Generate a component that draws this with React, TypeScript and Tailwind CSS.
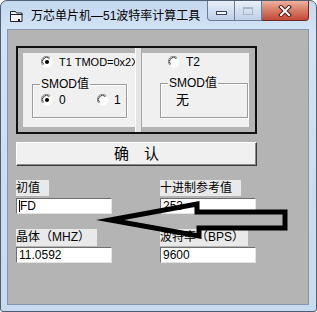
import React from "react";

function Radio({ on }: { on?: boolean }) {
  return (
    <svg width="12" height="12" viewBox="0 0 12 12" className="shrink-0">
      <circle cx="6" cy="6" r="5.5" fill="#ffffff" />
      <path d="M1.8 9.2A5.2 5.2 0 0 1 9.2 1.8" fill="none" stroke="#8a8a8a" strokeWidth="1" />
      <path d="M2.6 8.4A4 4 0 0 1 8.4 2.6" fill="none" stroke="#3a3a3a" strokeWidth="1" />
      {on && <circle cx="6" cy="6" r="2" fill="#000000" />}
    </svg>
  );
}

function Field({ value, caret }: { value: string; caret?: boolean }) {
  return (
    <div className="w-[96px] h-[16px] bg-white border-t border-l border-t-[#6f6f6f] border-l-[#6f6f6f] border-b border-r border-b-[#e4e4e4] border-r-[#e4e4e4] flex items-center pl-[2px] text-[12px] leading-[14px] text-black whitespace-nowrap">
      {caret && <span className="w-[1px] h-[12px] bg-black mr-[0px]" />}
      {value}
    </div>
  );
}

function Label({ text, w, h = "h-[16px]" }: { text: string; w: string; h?: string }) {
  return (
    <div className={`${w} ${h} bg-[#e9e9e9] text-[12px] leading-[16px] text-black whitespace-nowrap`}>{text}</div>
  );
}

export default function App() {
  return (
    <div className="w-[317px] h-[312px] bg-white font-['Liberation_Sans','Noto_Sans_CJK_SC',sans-serif]">
      <div className="w-full h-full flex flex-col border border-[#4f5e73] rounded-t-[7px] rounded-b-[3px] bg-[linear-gradient(#c4d8ef,#d3e3f5_30px,#c8daef)]">
        {/* title bar */}
        <div className="h-[28px] flex items-start shrink-0">
          <svg width="13" height="12" viewBox="0 0 13 12" className="ml-[9px] mt-[9px]">
            <path d="M0.5 1.5h5l1 1.5h5.5v8.5h-11.5z" fill="#f4f4f4" stroke="#202020" />
            <path d="M0.5 4.5h12" stroke="#202020" />
            <rect x="8" y="9" width="2" height="2" fill="#202020" />
          </svg>
          <div className="ml-[8px] mt-[7px] text-[12px] leading-[16px] text-black whitespace-nowrap">万芯单片机—51波特率计算工具</div>
          <div className="flex-1" />
          <div className="flex h-[20px] mr-[7px]">
            <div className="w-[28px] h-[20px] border border-t-0 border-[#6b7c95] rounded-bl-[4px] bg-[linear-gradient(#e9f0f9,#d2dfee_50%,#bfd0e6)] flex items-center justify-center">
              <div className="w-[11px] h-[4px] bg-white border border-[#34445a] mt-[5px]" />
            </div>
            <div className="w-[27px] h-[20px] border-b border-r border-[#6b7c95] bg-[linear-gradient(#e9f0f9,#d2dfee_50%,#bfd0e6)] flex items-center justify-center">
              <div className="w-[10px] h-[8px] border border-[#a9b6c8] border-t-2" />
            </div>
            <div className="w-[47px] h-[20px] border-b border-r border-[#6e2a22] rounded-br-[4px] bg-[linear-gradient(#eeb0a0,#d8806c_45%,#c14a36)] flex items-center justify-center">
              <svg width="14" height="12" viewBox="0 0 14 12">
                <path d="M3 2L11 10M11 2L3 10" stroke="#4a1a14" strokeWidth="4" strokeLinecap="square" />
                <path d="M3 2L11 10M11 2L3 10" stroke="#ffffff" strokeWidth="2" strokeLinecap="square" />
              </svg>
            </div>
          </div>
        </div>

        {/* client */}
        <div className="pl-[6px] pr-[7px] pb-[6px]">
          <div className="relative h-[276px] border border-[#8597ae] bg-[#b4b4b4] overflow-hidden">
            <div className="flex flex-col pl-[8px] pt-[16px]">
              {/* timer frame */}
              <div className="w-[241px] h-[88px] border-2 border-[#111111] flex">
                <div className="pl-[5px] py-[5px]">
                  <div className="w-[112px] h-[74px] bg-[#f0f0f0] overflow-hidden flex flex-col">
                    <div className="flex items-center h-[12px] mt-[3px] pl-[18px]">
                      <Radio on />
                      <span className="ml-[6px] text-[11px] leading-[14px] text-black whitespace-nowrap">T1 TMOD=0x2X</span>
                    </div>
                    <fieldset className="ml-[9px] mt-[9px] w-[95px] h-[41px] border border-[#9c9c9c] shadow-[inset_1px_1px_0_#ffffff,1px_1px_0_#ffffff]">
                      <legend className="ml-[7px] px-[1px] text-[12px] leading-[14px] text-black">SMOD值</legend>
                      <div className="flex items-center h-[12px] mt-[3px] pl-[8px]">
                        <div className="flex items-center w-[56px]">
                          <Radio on />
                          <span className="ml-[6px] text-[12px] leading-[14px] text-black">0</span>
                        </div>
                        <Radio />
                        <span className="ml-[5px] text-[12px] leading-[14px] text-black">1</span>
                      </div>
                    </fieldset>
                  </div>
                </div>
                <div className="w-[7px] h-full bg-[#e4e4e4] border-l border-l-white border-r border-r-[#a8a8a8]" />
                <div className="pr-[6px] py-[5px]">
                  <div className="w-[107px] h-[74px] bg-[#f0f0f0] overflow-hidden flex flex-col">
                    <div className="flex items-center h-[12px] mt-[3px] pl-[26px]">
                      <Radio />
                      <span className="ml-[6px] text-[12px] leading-[14px] text-black">T2</span>
                    </div>
                    <fieldset className="ml-[18px] mt-[8px] w-[88px] h-[42px] border border-[#9c9c9c] shadow-[inset_1px_1px_0_#ffffff,1px_1px_0_#ffffff]">
                      <legend className="ml-[7px] px-[1px] text-[12px] leading-[14px] text-black">SMOD值</legend>
                      <div className="pl-[15px] mt-[2px] text-[13px] leading-[16px] text-black">无</div>
                    </fieldset>
                  </div>
                </div>
              </div>

              {/* confirm button */}
              <button className="mt-[8px] w-[241px] h-[24px] bg-[#f0f0f0] border border-t-white border-l-white border-b-[#3c3c3c] border-r-[#3c3c3c] shadow-[inset_-1px_-1px_0_#8a8a8a] text-[15px] leading-[18px] text-black">
                确　认
              </button>

              {/* values */}
              <div className="mt-[14px] flex">
                <div className="w-[144px] flex flex-col">
                  <Label text="初值" w="w-[33px]" />
                  <div className="mt-[2px]"><Field value="FD" caret /></div>
                </div>
                <div className="flex flex-col">
                  <Label text="十进制参考值" w="w-[81px]" />
                  <div className="mt-[2px]"><Field value="253" /></div>
                </div>
              </div>
              <div className="mt-[15px] flex">
                <div className="w-[144px] flex flex-col">
                  <Label text="晶体（MHZ）" w="w-[81px]" h="h-[17px]" />
                  <div className="mt-[1px]"><Field value="11.0592" /></div>
                </div>
                <div className="flex flex-col">
                  <Label text="波特率（BPS）" w="w-[88px]" h="h-[17px]" />
                  <div className="mt-[1px]"><Field value="9600" /></div>
                </div>
              </div>
            </div>

            {/* arrow drawn over the form */}
            <svg className="absolute left-0 top-0 pointer-events-none" width="300" height="274" viewBox="8 30 300 274">
              <path
                d="M110 220L197 204L197 212L285 212L285 228L199 228L199 236Z"
                fill="none"
                stroke="#000000"
                strokeWidth="5"
                strokeLinejoin="miter"
                strokeMiterlimit="10"
              />
            </svg>
          </div>
        </div>
      </div>
    </div>
  );
}
